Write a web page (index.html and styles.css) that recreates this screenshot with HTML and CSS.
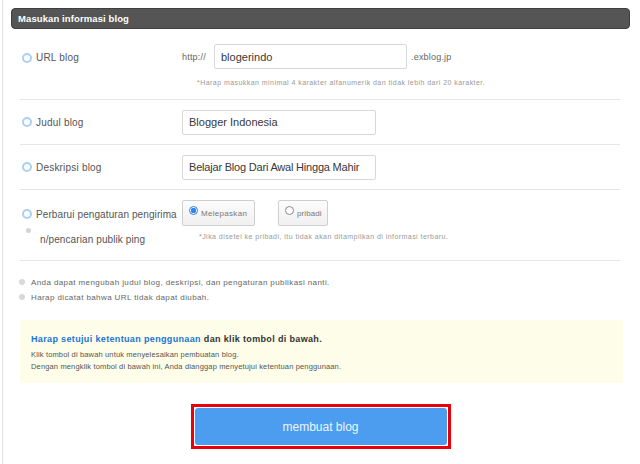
FILE: index.html
```html
<!DOCTYPE html>
<html>
<head>
<meta charset="utf-8">
<link rel="stylesheet" href="styles.css">
</head>
<body>
<div class="page">
  <div class="panel-head">Masukan informasi blog</div>
  <div class="form">
    <div class="row row-url">
      <div class="label"><span class="ring"></span>URL blog</div>
      <div class="field">
        <div class="url-line">
          <span class="prefix">http://</span>
          <span class="input input-url">blogerindo</span>
          <span class="suffix">.exblog.jp</span>
        </div>
        <div class="hint hint-url">*Harap masukkan minimal 4 karakter alfanumerik dan tidak lebih dari 20 karakter.</div>
      </div>
    </div>
    <div class="row row-simple">
      <div class="label"><span class="ring"></span>Judul blog</div>
      <div class="field"><span class="input input-wide">Blogger Indonesia</span></div>
    </div>
    <div class="row row-simple">
      <div class="label"><span class="ring"></span>Deskripsi blog</div>
      <div class="field"><span class="input input-wide input-desc">Belajar Blog Dari Awal Hingga Mahir</span></div>
    </div>
    <div class="row row-ping">
      <div class="label label-ping">
        <div class="ping-line"><span class="ring"></span>Perbarui pengaturan pengirima</div>
        <div class="ping-line ping-line2"><span class="dot"></span>n/pencarian publik ping</div>
      </div>
      <div class="field">
        <div class="choices">
          <span class="choice choice-on"><span class="radio radio-on"></span>Melepaskan</span>
          <span class="choice choice-off"><span class="radio"></span>pribadi</span>
        </div>
        <div class="hint hint-ping">*Jika disetel ke pribadi, itu tidak akan ditampilkan di informasi terbaru.</div>
      </div>
    </div>
  </div>
  <ul class="notes">
    <li>Anda dapat mengubah judul blog, deskripsi, dan pengaturan publikasi nanti.</li>
    <li>Harap dicatat bahwa URL tidak dapat diubah.</li>
  </ul>
  <div class="agree">
    <p class="agree-title"><span class="link">Harap setujui ketentuan penggunaan</span> dan klik tombol di bawah.</p>
    <p class="agree-text">Klik tombol di bawah untuk menyelesaikan pembuatan blog.<br>Dengan mengklik tombol di bawah ini, Anda dianggap menyetujui ketentuan penggunaan.</p>
  </div>
  <div class="submit-area">
    <div class="highlight"><span class="submit">membuat blog</span></div>
  </div>
</div>
</body>
</html>
```

FILE: styles.css
```css
html, body {
  margin: 0;
  padding: 0;
  background: #fff;
}
body {
  font-family: "Liberation Sans", Arial, sans-serif;
  color: #444;
}
.page {
  margin-left: 2px;
  border-left: 1px solid #e2e2e2;
  min-height: 464px;
  box-sizing: border-box;
  padding-top: 8px;
}
.panel-head {
  margin: 0 10px 0 8px;
  height: 21px;
  box-sizing: border-box;
  background: #555;
  border: 1px solid #3f3f3f;
  border-radius: 4px;
  color: #fff;
  font-weight: bold;
  font-size: 9.5px;
  letter-spacing: 0.1px;
  line-height: 19px;
  padding-left: 6px;
}
.form {
  margin: 0 20px 0 17px;
}
.row {
  display: grid;
  grid-template-columns: 162px 1fr;
  border-bottom: 1px solid #e6e6e6;
}
.label {
  display: flex;
  align-items: center;
  font-size: 10px;
  letter-spacing: 0.2px;
  color: #555;
  padding-left: 2px;
  white-space: nowrap;
}
.ring {
  width: 6px;
  height: 6px;
  border: 2px solid #a9d0f3;
  border-radius: 50%;
  margin-right: 4px;
  flex: none;
}
.row-url {
  height: 70px;
  align-items: start;
}
.row-url .label {
  height: 25px;
  margin-top: 16px;
}
.row-url .field {
  padding-top: 15px;
}
.url-line {
  display: flex;
  align-items: center;
  font-size: 9px;
  color: #666;
  letter-spacing: 0.2px;
}
.prefix {
  width: 32px;
}
.suffix {
  margin-left: 4px;
}
.input {
  display: flex;
  align-items: center;
  box-sizing: border-box;
  height: 25px;
  border: 1px solid #d8d8d8;
  border-radius: 2px;
  padding-left: 6px;
  font-size: 11px;
  color: #383838;
  letter-spacing: 0;
  background: #fff;
  white-space: nowrap;
  overflow: hidden;
}
.input-url {
  width: 193px;
}
.input-wide {
  width: 194px;
}
.input-desc {
  letter-spacing: -0.2px;
}
.hint {
  font-size: 7px;
  color: #999;
  letter-spacing: 0.45px;
}
.hint-url {
  margin: 10px 0 0 15px;
}
.row-simple {
  height: 44px;
  align-items: center;
}
.row-simple .label {
  height: 24px;
}
.row-ping {
  height: 70px;
  align-items: start;
}
.label-ping {
  display: block;
  padding-top: 17px;
  letter-spacing: 0.1px;
}
.ping-line {
  display: flex;
  align-items: center;
  height: 14px;
}
.ping-line2 {
  margin-top: 11px;
}
.dot {
  width: 5px;
  height: 5px;
  border-radius: 50%;
  background: #d4d4d4;
  margin: -18px 9px 0 4px;
  flex: none;
}
.row-ping .field {
  padding-top: 10px;
}
.choices {
  display: flex;
  gap: 23px;
}
.choice {
  display: flex;
  align-items: center;
  box-sizing: border-box;
  height: 26px;
  border: 1px solid #cfcfcf;
  border-radius: 2px;
  background: linear-gradient(#fcfcfc, #f0f0f0);
  font-size: 8px;
  color: #777;
  padding-left: 6px;
  letter-spacing: 0.1px;
  white-space: nowrap;
}
.choice-on {
  width: 73px;
  letter-spacing: 0.3px;
}
.choice-off {
  width: 50px;
}
.radio {
  box-sizing: border-box;
  width: 9px;
  height: 9px;
  border: 1px solid #888;
  border-radius: 50%;
  margin-right: 3px;
  margin-top: -5px;
  background: #fff;
  flex: none;
}
.radio-on {
  border: 1px solid #2f7fe0;
  background: radial-gradient(circle, #2f86f0 0 2.6px, #fff 3px);
}
.hint-ping {
  margin: 7px 0 0 17px;
}
.notes {
  list-style: none;
  margin: 14px 0 0 0;
  padding: 0 0 0 16px;
  font-size: 8px;
  color: #666;
  letter-spacing: 0.4px;
}
.notes li {
  display: flex;
  align-items: center;
  height: 15px;
}
.notes li::before {
  content: "";
  width: 6px;
  height: 6px;
  border-radius: 50%;
  background: #d8d8d8;
  margin-right: 6px;
  margin-top: -2px;
}
.agree {
  margin: 15px 17px 0 17px;
  background: #fdfde9;
  height: 63px;
  box-sizing: border-box;
  padding: 12px 11px 0 11px;
}
.agree-title {
  margin: 0;
  font-size: 9px;
  font-weight: bold;
  color: #333;
  letter-spacing: 0.35px;
  line-height: 14px;
}
.link {
  color: #1a73d8;
}
.agree-text {
  margin: 3px 0 0 0;
  font-size: 7.5px;
  color: #555;
  line-height: 12px;
  letter-spacing: 0.15px;
}
.submit-area {
  display: flex;
  justify-content: center;
  margin-top: 21px;
  padding-right: 2px;
}
.highlight {
  border: 3px solid #e8000b;
  padding: 1px;
  display: flex;
}
.submit {
  display: flex;
  align-items: center;
  justify-content: center;
  width: 252px;
  height: 37px;
  background: #4c9cf0;
  border-radius: 3px;
  color: #eef5ff;
  font-size: 12px;
}
```
